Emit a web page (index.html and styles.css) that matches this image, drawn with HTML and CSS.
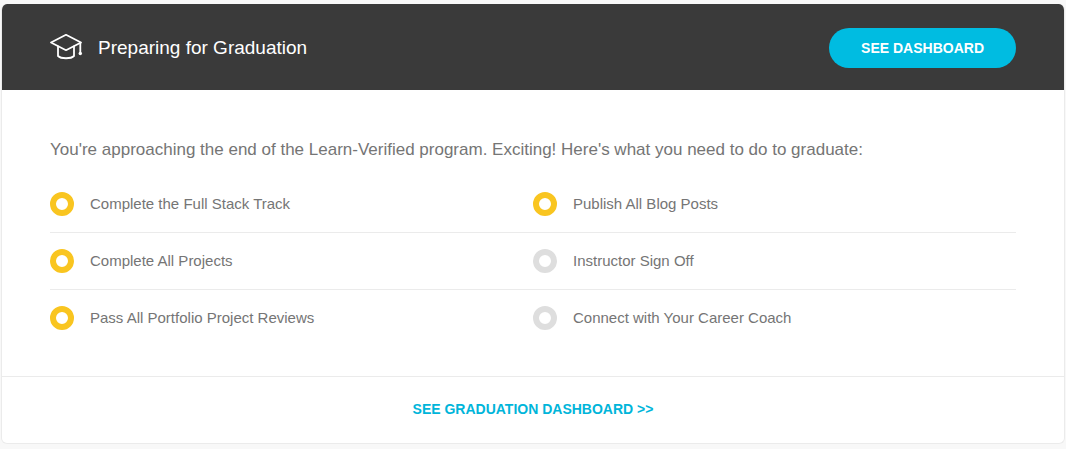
FILE: index.html
```html
<!DOCTYPE html>
<html lang="en">
<head>
<meta charset="utf-8">
<meta name="viewport" content="width=device-width, initial-scale=1">
<title>Preparing for Graduation</title>
<link rel="stylesheet" href="styles.css">
</head>
<body>
<main class="card">
  <header class="card-header">
    <svg class="cap" viewBox="0 0 32 28" aria-hidden="true">
      <path d="M1 8.500 16 0.800l15 7.700-15 7.700z"/>
      <path d="M8 12.500v9.500c3 3 13 3 16 0v-9.500"/>
      <path d="M30.300 9v10"/>
      <circle class="tassel" cx="30.300" cy="19.500" r="1.700"/>
    </svg>
    <h1 class="title">Preparing for Graduation</h1>
    <button class="button" type="button">SEE DASHBOARD</button>
  </header>
  <section class="card-body">
    <p class="intro">You're approaching the end of the Learn-Verified program. Exciting! Here's what you need to do to graduate:</p>
    <ul class="tasks">
      <li class="task active">Complete the Full Stack Track</li>
      <li class="task active">Publish All Blog Posts</li>
      <li class="task active">Complete All Projects</li>
      <li class="task">Instructor Sign Off</li>
      <li class="task active">Pass All Portfolio Project Reviews</li>
      <li class="task">Connect with Your Career Coach</li>
    </ul>
  </section>
  <footer class="card-footer"><a class="more" href="#dashboard">SEE GRADUATION DASHBOARD &gt;&gt;</a></footer>
</main>
</body>
</html>
```
FILE: styles.css
```css
*, *::before { box-sizing: border-box; }
body {
  margin: 0;
  padding: 4px 1px 5px;
  background: #f8f8f8;
  color: #757575;
  font-family: "Liberation Sans", Arial, sans-serif;
}
.card {
  background: #fff;
  border: 1px solid #ebebeb;
  border-top: 0;
  border-radius: 6px;
  overflow: hidden;
}
.card-header {
  display: flex;
  align-items: center;
  gap: 16px;
  padding: 24px 48px 22px;
  background: #3a3a3a;
  color: #fff;
}
.cap {
  flex: none;
  width: 32px;
  height: 28px;
  overflow: visible;
  fill: none;
  stroke: #fff;
  stroke-width: 1.8;
  stroke-linejoin: round;
  stroke-linecap: round;
}
.tassel { fill: #fff; stroke: none; }
.title { flex: 1; margin: 0; font-size: 19px; line-height: 24px; font-weight: 400; }
.button {
  height: 40px;
  padding: 0 32px;
  border: 0;
  border-radius: 20px;
  background: #00bce1;
  color: #fff;
  font: bold 14px/20px "Liberation Sans", Arial, sans-serif;
}
.card-body { padding: 48px 48px 29px; }
.intro { margin: 0; font-size: 17px; line-height: 24px; }
.tasks {
  display: grid;
  grid-template-columns: 1fr 1fr;
  margin: 14px 0 0;
  padding: 0;
  list-style: none;
}
.task {
  display: flex;
  align-items: center;
  gap: 16px;
  height: 57px;
  font-size: 15px;
  line-height: 20px;
  border-bottom: 1px solid #ebebeb;
}
.task:nth-last-child(-n+2) { border-bottom-color: transparent; }
.task::before {
  content: "";
  flex: none;
  width: 24px;
  height: 24px;
  border: 6px solid #dedede;
  border-radius: 50%;
}
.task.active::before { border-color: #f9c520; }
.card-footer {
  display: flex;
  justify-content: center;
  padding: 22px 48px 24px;
  border-top: 1px solid #ebebeb;
}
.more { color: #00b5da; font-size: 14px; line-height: 20px; font-weight: 700; text-decoration: none; }
```
